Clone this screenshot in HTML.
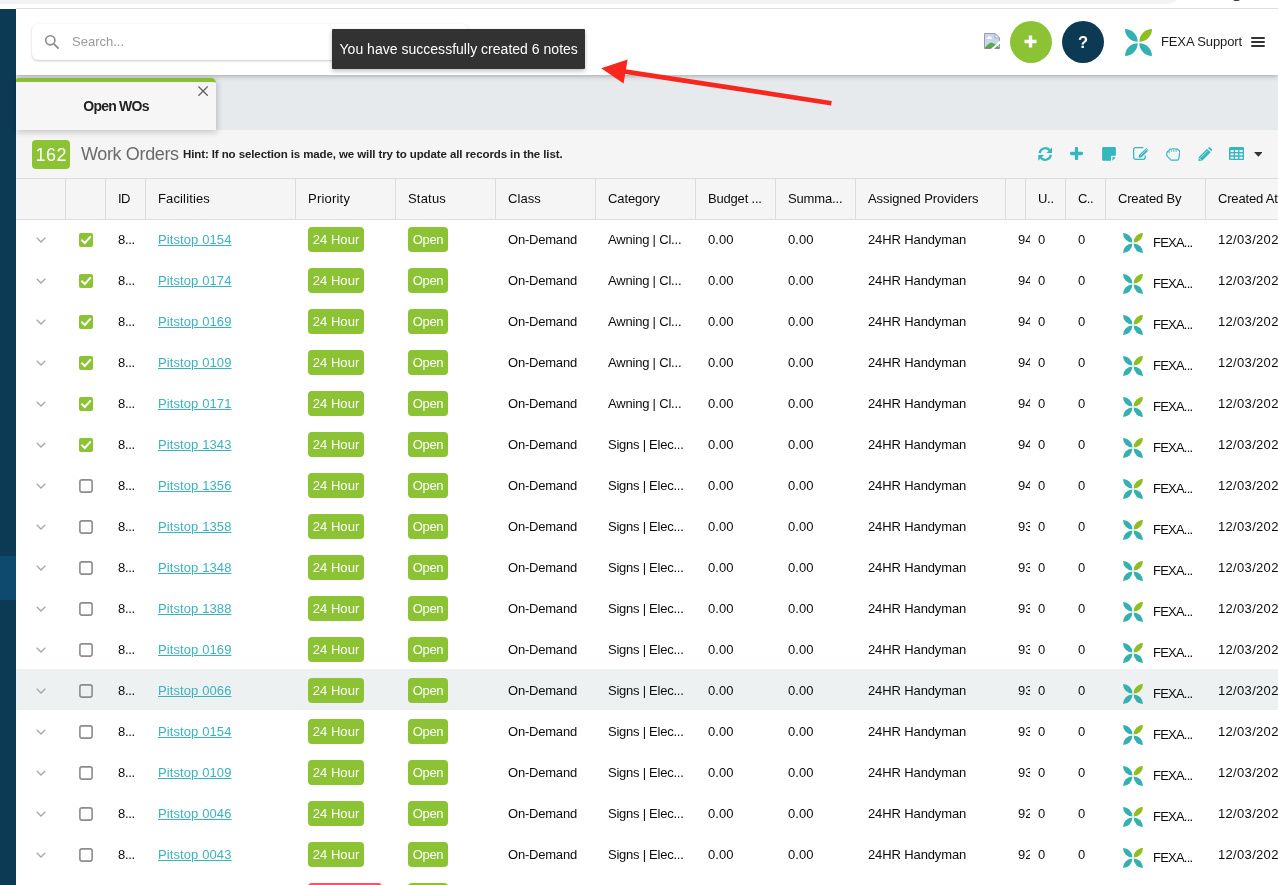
<!DOCTYPE html>
<html><head><meta charset="utf-8"><title>Work Orders</title>
<style>
*{box-sizing:border-box;margin:0;padding:0}
html,body{width:1278px;height:885px;overflow:hidden;background:#fff;font-family:"Liberation Sans",sans-serif;color:#1a1a1a}
.abs{position:absolute}
#chrome{position:absolute;left:0;top:0;width:1278px;height:9px;background:#fff}
#chrome .bar{position:absolute;left:-20px;top:-20px;width:1201px;height:24px;border-radius:0 0 14px 0;background:#f1f3f4}
#chrome .ln{position:absolute;left:16px;right:0;top:8px;height:1px;background:#dcdee1}
#chrome .dot{position:absolute;left:1232px;top:-3px;width:9px;height:4px;background:#333;border-radius:0 0 4px 4px}
#side{position:absolute;left:0;top:9px;width:16px;height:876px;background:#0c3954}
#side .act{position:absolute;left:0;top:547px;width:16px;height:44px;background:#0e4a6e}
#top{position:absolute;left:16px;top:9px;width:1262px;height:66px;background:#fff;box-shadow:0 1px 5px rgba(0,0,0,.3);z-index:5;clip-path:inset(0px 0px -14px 0px)}
#search{position:absolute;left:16px;top:15px;width:436px;height:36px;border-radius:6px;background:#fff;box-shadow:0 1px 3px rgba(0,0,0,.13),0 1px 2px rgba(0,0,0,.1)}
#search span{position:absolute;left:40px;top:10px;font-size:13px;color:#9a9a9a}
#search svg{position:absolute;left:12px;top:10px;width:16px;height:16px}
#toast{position:absolute;left:332px;top:29px;width:253px;height:39.7px;background:#323232;border-radius:1px;color:#fff;font-size:14px;line-height:41px;padding-left:7.5px;letter-spacing:0.02px;z-index:9;box-shadow:0 2px 4px rgba(0,0,0,.25);white-space:nowrap}
#arrow{position:absolute;left:0;top:0;width:1278px;height:140px;z-index:10;pointer-events:none}
.circ{position:absolute;top:12px;width:42px;height:42px;border-radius:50%}
#uname{position:absolute;left:1145px;top:25px;letter-spacing:-0.12px;font-size:13px;color:#1c1c1c;white-space:nowrap}
#burger{position:absolute;left:1235px;top:28px;width:14px;height:12px}
#burger i{display:block;height:2.4px;background:#333;margin-bottom:1.6px;border-radius:1px}
.lg1{position:absolute;left:1108.5px;top:19.5px;width:27px;height:27px}
#tabs{position:absolute;left:16px;top:75px;width:1262px;height:55px;background:#e6eaed;z-index:4}
#tab{position:absolute;left:0;top:3px;width:200px;height:52px;background:#f6f6f6;border-top:4px solid #8bc334;border-radius:2px 5px 0 0;box-shadow:1px 2px 6px rgba(0,0,0,.21)}
#tab b{position:absolute;left:0;width:200px;text-align:center;top:16px;font-size:14px;letter-spacing:-0.77px;color:#222}
#tab svg{position:absolute;left:181.8px;top:4px;width:10.2px;height:10.2px}
#bar{position:absolute;left:16px;top:130px;width:1262px;height:48px;background:#f5f5f5}
#cnt{position:absolute;left:16px;top:10px;width:38px;height:29px;padding-top:1px;border-radius:4px;background:#8bc334;color:#fff;font-size:18px;line-height:29px;text-align:center;letter-spacing:0.4px;text-indent:0.4px}
#ttl{position:absolute;left:65px;top:13.5px;letter-spacing:-0.36px;font-size:18px;color:#6b6b6b;white-space:nowrap}
#hint{position:absolute;left:167px;top:18px;letter-spacing:-0.1px;font-size:11.5px;font-weight:bold;color:#222;white-space:nowrap}
#thead{position:absolute;z-index:3;left:16px;top:178px;width:1262px;height:42px;background:#f5f5f5;border-top:1px solid #dcdcdc;border-bottom:1px solid #dcdcdc}
.th{position:absolute;top:0;height:40px;border-right:1px solid #dcdcdc;font-size:13px;line-height:40px;padding-left:12px;white-space:nowrap;overflow:hidden;color:#0c0c0c}
.row{position:absolute;left:16px;width:1262px;height:41px;background:#fff;font-size:13px}
.row.hov{background:#eef1f2}
.c{position:absolute;top:14px;line-height:15px;white-space:nowrap;color:#0c0c0c}
.lnk{color:#3bb3bd;text-decoration:underline}
.bdg{position:absolute;top:9px;height:25px;border-radius:4px;background:#8bc334;color:#fff;text-align:center;line-height:25px;font-size:13px;white-space:nowrap}
.bdg.red{background:#f0566a}
.chev{position:absolute;left:20px;top:19px;width:10px;height:6px}
.cb{position:absolute;left:63px;top:15px;width:14px;height:14px;border-radius:2px}
.cb.on{background:#8bc334}
.cb svg{display:block;width:14px;height:14px}
.lg2{position:absolute;left:1107px;top:15px;width:20px;height:20px}
.n94{width:12px;overflow:hidden}
.fx{top:16.5px}
.tool{position:absolute;top:15px;width:16px;height:16px}
#wrap{position:absolute;left:0;top:0;width:1278px;height:885px;will-change:transform}
</style></head><body><div id="wrap">
<div id="chrome"><div class="bar"></div><div class="ln"></div><div class="dot"></div></div>
<div id="side"><div class="act"></div></div>
<div id="tabs"><div id="tab"><b>Open WOs</b><svg viewBox="0 0 11 11"><path d="M0.5 0.5L10.5 10.5M10.5 0.5L0.5 10.5" stroke="#5e5e5e" stroke-width="1.4"/></svg></div></div>
<div id="top">
<div id="search"><svg viewBox="0 0 16 16"><circle cx="6.3" cy="6.3" r="4.6" fill="none" stroke="#8a8a8a" stroke-width="1.6"/><path d="M9.8 9.8L14.6 14.6" stroke="#8a8a8a" stroke-width="1.8"/></svg><span>Search...</span></div>
<svg class="abs" style="left:968px;top:24px;width:16px;height:16px" viewBox="0 0 16 16"><path d="M0.5 0.5H11L15.5 5V15.5H0.5Z" fill="#c6d6f5" stroke="#9c9ca8" stroke-width="1"/><path d="M11 0.5V5H15.5Z" fill="#f7f7f7" stroke="#a8a8b0" stroke-width="1"/><path d="M2.2 5.8Q2.2 4.6 3.6 4.6Q4.2 3 5.6 3.4Q7.2 3.2 7.4 4.8Q8.2 5 7.9 5.9Z" fill="#fff"/><path d="M1 15Q4.5 9.4 8.5 9.9Q12.5 10.4 15 15Z" fill="#5aad3e"/><path d="M1 15H15" stroke="#6b8a6b" stroke-width="1"/><path d="M6.6 16.2L16.2 7.4V10.2L9.8 16.2Z" fill="#fff"/></svg>
<div class="circ" style="left:994px;background:#8bc334"><svg class="abs" style="left:14px;top:14px;width:13px;height:13px" viewBox="0 0 13 13"><path d="M6.5 0.5V12.5M0.5 6.5H12.5" stroke="#fff" stroke-width="3.4"/></svg></div>
<div class="circ" style="left:1046px;background:#0c3954;color:#fff;font-weight:bold;font-size:16.5px;text-align:center;line-height:42px">?</div>
<svg class="lg1" viewBox="-1 -1 2 2"><path d="M-1-1A.94.94 0 0 1-.06-.06A.94.94 0 0 1-1-1Z" fill="#35b0b0"/><path d="M1-1A.94.94 0 0 0 .06-.06A.94.94 0 0 0 1-1Z" fill="#8fbe21"/><path d="M-1 1A.94.94 0 0 0-.06.06A.94.94 0 0 0-1 1Z" fill="#35b0b0"/><path d="M1 1A.94.94 0 0 1 .06.06A.94.94 0 0 1 1 1Z" fill="#35b0b0"/></svg>
<span id="uname">FEXA Support</span>
<div id="burger"><i></i><i></i><i></i></div>
</div>
<div id="toast">You have successfully created 6 notes</div>
<svg id="arrow" viewBox="0 0 1278 140"><path d="M831.4 103.2L622 71.1" stroke="#f8261c" stroke-width="4.7" fill="none"/><path d="M601.2 68.3L627.6 59.6L623.6 83.6Z" fill="#f8261c"/></svg>
<div id="bar"><div id="cnt">162</div><div id="ttl">Work Orders</div><div id="hint">Hint: If no selection is made, we will try to update all records in the list.</div>
<svg class="abs" style="left:1021.8px;top:17px;width:14.5px;height:14px" viewBox="0 0 14 14"><path d="M1.4 6.1A5.75 5.75 0 0 1 11.3 3.1" fill="none" stroke="#34b7be" stroke-width="2.3"/><path d="M14 0.3V6.1H8.2Z" fill="#34b7be"/><path d="M12.6 7.9A5.75 5.75 0 0 1 2.7 10.9" fill="none" stroke="#34b7be" stroke-width="2.3"/><path d="M0 13.7V7.9H5.8Z" fill="#34b7be"/></svg>
<svg class="abs" style="left:1054.3px;top:17.2px;width:13px;height:13px" viewBox="0 0 13 13"><path d="M6.5 1.5V11.5M1.5 6.5H11.5" stroke="#34b7be" stroke-width="3.3" stroke-linecap="round"/></svg>
<svg class="abs" style="left:1086.1px;top:17.2px;width:14px;height:13.8px" viewBox="0 0 14 14"><path d="M1.2 0H12.8Q14 0 14 1.2V9H10.2Q9 9 9 10.2V14H1.2Q0 14 0 12.8V1.2Q0 0 1.2 0Z" fill="#34b7be"/><path d="M10.4 10.4H14L10.4 14Z" fill="#34b7be"/></svg>
<svg class="abs" style="left:1117px;top:17px;width:16.5px;height:13px" viewBox="0 0 16.5 13"><path d="M10.2 0.7H2.6Q0.6 0.7 0.6 2.7V10.3Q0.6 12.3 2.6 12.3H10.2Q12.2 12.3 12.2 10.3V8.6" fill="none" stroke="#34b7be" stroke-width="1.25"/><path d="M6.1 8.1L13.3 0.9L15.6 3.2L8.4 10.4L5.7 10.8Z" fill="#34b7be"/><path d="M7.6 8.3L13.2 2.7" stroke="#f5f5f5" stroke-width=".6"/><path d="M12.4 1.5L15 4.1" stroke="#f5f5f5" stroke-width=".7"/></svg>
<svg class="abs" style="left:1149.8px;top:18.4px;width:14.6px;height:12.8px" viewBox="0 0 14.6 12.8"><path d="M4.2 11.2L1.6 8.6Q0.4 7.2 0.8 5.2Q1.1 3.2 2.8 2.6Q3.4 1 5 1.2Q6.2 0.4 7.4 1Q8.8 0.4 10 1.2Q11.8 0.8 12.6 2.2Q13.9 2.6 13.8 4.4L13 9.4Q12.8 10.6 12.4 11.4Q12.2 12.2 11.4 12.2H5.4Q4.4 12.2 4.2 11.2Z" fill="none" stroke="#34b7be" stroke-width="1.2" stroke-linejoin="round"/><path d="M3.2 3V5.4M5.4 1.8V3.8M7.7 1.6V3.8M10.1 1.8V3.8" stroke="#34b7be" stroke-width=".9" fill="none"/></svg>
<svg class="abs" style="left:1181.6px;top:17.2px;width:14.4px;height:14px" viewBox="0 0 14.4 14"><path d="M0.4 13.9L0.9 9.9L9.1 1.7L12.6 5.2L4.4 13.4Z" fill="#34b7be"/><path d="M10 0.9L10.8 0.2Q11.4 -0.1 12 0.4L13.9 2.3Q14.4 2.9 14 3.5L13.3 4.3Z" fill="#34b7be"/><path d="M2.6 10.6L9.6 3.6" stroke="#f5f5f5" stroke-width=".7"/><path d="M1.3 11.2L3.2 13.1" stroke="#f5f5f5" stroke-width=".7"/></svg>
<svg class="abs" style="left:1213.2px;top:17px;width:15.2px;height:13.2px" viewBox="0 0 15.2 13.2"><rect x="0" y="0" width="15.2" height="13.2" rx="1.6" fill="#34b7be"/><g fill="#f5f5f5"><rect x="1.5" y="3.1" width="3.2" height="1.9"/><rect x="6" y="3.1" width="3.2" height="1.9"/><rect x="10.5" y="3.1" width="3.2" height="1.9"/><rect x="1.5" y="6.4" width="3.2" height="1.9"/><rect x="6" y="6.4" width="3.2" height="1.9"/><rect x="10.5" y="6.4" width="3.2" height="1.9"/><rect x="1.5" y="9.8" width="3.2" height="1.9"/><rect x="6" y="9.8" width="3.2" height="1.9"/><rect x="10.5" y="9.8" width="3.2" height="1.9"/></g></svg>
<svg class="abs" style="left:1237.6px;top:21.8px;width:8.8px;height:4.8px" viewBox="0 0 8.8 4.8"><path d="M0 0H8.8L4.4 4.8Z" fill="#333"/></svg>
</div>
<div id="thead">
<div class="th" style="left:0px;width:50px;"><span></span></div>
<div class="th" style="left:50px;width:40px;"><span></span></div>
<div class="th" style="left:90px;width:40px;letter-spacing:-0.5px"><span>ID</span></div>
<div class="th" style="left:130px;width:150px;letter-spacing:0.14px"><span>Facilities</span></div>
<div class="th" style="left:280px;width:100px;letter-spacing:0.21px"><span>Priority</span></div>
<div class="th" style="left:380px;width:100px;letter-spacing:0.2px"><span>Status</span></div>
<div class="th" style="left:480px;width:100px;letter-spacing:0.08px"><span>Class</span></div>
<div class="th" style="left:580px;width:100px;letter-spacing:-0.11px"><span>Category</span></div>
<div class="th" style="left:680px;width:80px;letter-spacing:-0.19px"><span>Budget ...</span></div>
<div class="th" style="left:760px;width:80px;letter-spacing:-0.16px"><span>Summa...</span></div>
<div class="th" style="left:840px;width:150px;letter-spacing:-0.09px"><span>Assigned Providers</span></div>
<div class="th" style="left:990px;width:20px;"><span></span></div>
<div class="th" style="left:1010px;width:40px;letter-spacing:-0.3px"><span>U..</span></div>
<div class="th" style="left:1050px;width:40px;letter-spacing:-0.55px"><span>C..</span></div>
<div class="th" style="left:1090px;width:100px;letter-spacing:-0.18px"><span>Created By</span></div>
<div class="th" style="left:1190px;width:100px;letter-spacing:-0.18px"><span>Created At</span></div>
</div>
<div class="row" style="top:218px">
<svg class="chev" viewBox="0 0 10 6"><path d="M0.7 0.7L5 5L9.3 0.7" fill="none" stroke="#a6a6a6" stroke-width="1.25"/></svg>
<span class="cb on"><svg viewBox="0 0 14 14"><path d="M2.4 6.8L5.8 10L11.8 3.4" fill="none" stroke="#fff" stroke-width="2"/></svg></span>
<span class="c" style="left:102px;letter-spacing:-0.3px">8...</span>
<a class="c lnk" style="left:142px;letter-spacing:.1px">Pitstop 0154</a>
<span class="bdg" style="left:292px;width:56px;letter-spacing:0.07px">24 Hour</span>
<span class="bdg" style="left:392px;width:40px;letter-spacing:-0.33px">Open</span>
<span class="c" style="left:492px;letter-spacing:-0.21px">On-Demand</span>
<span class="c" style="left:592px;letter-spacing:-0.2px">Awning | Cl...</span>
<span class="c" style="left:692px;letter-spacing:0.1px">0.00</span>
<span class="c" style="left:772px;letter-spacing:0.1px">0.00</span>
<span class="c" style="left:852px;letter-spacing:-0.12px">24HR Handyman</span>
<span class="c n94" style="left:1002px">94</span>
<span class="c" style="left:1022px">0</span>
<span class="c" style="left:1062px">0</span>
<svg class="lg2" viewBox="-1 -1 2 2"><path d="M-1-1A.94.94 0 0 1-.06-.06A.94.94 0 0 1-1-1Z" fill="#35b0b0"/><path d="M1-1A.94.94 0 0 0 .06-.06A.94.94 0 0 0 1-1Z" fill="#8fbe21"/><path d="M-1 1A.94.94 0 0 0-.06.06A.94.94 0 0 0-1 1Z" fill="#35b0b0"/><path d="M1 1A.94.94 0 0 1 .06.06A.94.94 0 0 1 1 1Z" fill="#35b0b0"/></svg>
<span class="c fx" style="left:1137px;letter-spacing:-0.78px">FEXA...</span>
<span class="c" style="left:1202px;letter-spacing:.32px">12/03/2024</span>
</div>
<div class="row" style="top:259px">
<svg class="chev" viewBox="0 0 10 6"><path d="M0.7 0.7L5 5L9.3 0.7" fill="none" stroke="#a6a6a6" stroke-width="1.25"/></svg>
<span class="cb on"><svg viewBox="0 0 14 14"><path d="M2.4 6.8L5.8 10L11.8 3.4" fill="none" stroke="#fff" stroke-width="2"/></svg></span>
<span class="c" style="left:102px;letter-spacing:-0.3px">8...</span>
<a class="c lnk" style="left:142px;letter-spacing:.1px">Pitstop 0174</a>
<span class="bdg" style="left:292px;width:56px;letter-spacing:0.07px">24 Hour</span>
<span class="bdg" style="left:392px;width:40px;letter-spacing:-0.33px">Open</span>
<span class="c" style="left:492px;letter-spacing:-0.21px">On-Demand</span>
<span class="c" style="left:592px;letter-spacing:-0.2px">Awning | Cl...</span>
<span class="c" style="left:692px;letter-spacing:0.1px">0.00</span>
<span class="c" style="left:772px;letter-spacing:0.1px">0.00</span>
<span class="c" style="left:852px;letter-spacing:-0.12px">24HR Handyman</span>
<span class="c n94" style="left:1002px">94</span>
<span class="c" style="left:1022px">0</span>
<span class="c" style="left:1062px">0</span>
<svg class="lg2" viewBox="-1 -1 2 2"><path d="M-1-1A.94.94 0 0 1-.06-.06A.94.94 0 0 1-1-1Z" fill="#35b0b0"/><path d="M1-1A.94.94 0 0 0 .06-.06A.94.94 0 0 0 1-1Z" fill="#8fbe21"/><path d="M-1 1A.94.94 0 0 0-.06.06A.94.94 0 0 0-1 1Z" fill="#35b0b0"/><path d="M1 1A.94.94 0 0 1 .06.06A.94.94 0 0 1 1 1Z" fill="#35b0b0"/></svg>
<span class="c fx" style="left:1137px;letter-spacing:-0.78px">FEXA...</span>
<span class="c" style="left:1202px;letter-spacing:.32px">12/03/2024</span>
</div>
<div class="row" style="top:300px">
<svg class="chev" viewBox="0 0 10 6"><path d="M0.7 0.7L5 5L9.3 0.7" fill="none" stroke="#a6a6a6" stroke-width="1.25"/></svg>
<span class="cb on"><svg viewBox="0 0 14 14"><path d="M2.4 6.8L5.8 10L11.8 3.4" fill="none" stroke="#fff" stroke-width="2"/></svg></span>
<span class="c" style="left:102px;letter-spacing:-0.3px">8...</span>
<a class="c lnk" style="left:142px;letter-spacing:.1px">Pitstop 0169</a>
<span class="bdg" style="left:292px;width:56px;letter-spacing:0.07px">24 Hour</span>
<span class="bdg" style="left:392px;width:40px;letter-spacing:-0.33px">Open</span>
<span class="c" style="left:492px;letter-spacing:-0.21px">On-Demand</span>
<span class="c" style="left:592px;letter-spacing:-0.2px">Awning | Cl...</span>
<span class="c" style="left:692px;letter-spacing:0.1px">0.00</span>
<span class="c" style="left:772px;letter-spacing:0.1px">0.00</span>
<span class="c" style="left:852px;letter-spacing:-0.12px">24HR Handyman</span>
<span class="c n94" style="left:1002px">94</span>
<span class="c" style="left:1022px">0</span>
<span class="c" style="left:1062px">0</span>
<svg class="lg2" viewBox="-1 -1 2 2"><path d="M-1-1A.94.94 0 0 1-.06-.06A.94.94 0 0 1-1-1Z" fill="#35b0b0"/><path d="M1-1A.94.94 0 0 0 .06-.06A.94.94 0 0 0 1-1Z" fill="#8fbe21"/><path d="M-1 1A.94.94 0 0 0-.06.06A.94.94 0 0 0-1 1Z" fill="#35b0b0"/><path d="M1 1A.94.94 0 0 1 .06.06A.94.94 0 0 1 1 1Z" fill="#35b0b0"/></svg>
<span class="c fx" style="left:1137px;letter-spacing:-0.78px">FEXA...</span>
<span class="c" style="left:1202px;letter-spacing:.32px">12/03/2024</span>
</div>
<div class="row" style="top:341px">
<svg class="chev" viewBox="0 0 10 6"><path d="M0.7 0.7L5 5L9.3 0.7" fill="none" stroke="#a6a6a6" stroke-width="1.25"/></svg>
<span class="cb on"><svg viewBox="0 0 14 14"><path d="M2.4 6.8L5.8 10L11.8 3.4" fill="none" stroke="#fff" stroke-width="2"/></svg></span>
<span class="c" style="left:102px;letter-spacing:-0.3px">8...</span>
<a class="c lnk" style="left:142px;letter-spacing:.1px">Pitstop 0109</a>
<span class="bdg" style="left:292px;width:56px;letter-spacing:0.07px">24 Hour</span>
<span class="bdg" style="left:392px;width:40px;letter-spacing:-0.33px">Open</span>
<span class="c" style="left:492px;letter-spacing:-0.21px">On-Demand</span>
<span class="c" style="left:592px;letter-spacing:-0.2px">Awning | Cl...</span>
<span class="c" style="left:692px;letter-spacing:0.1px">0.00</span>
<span class="c" style="left:772px;letter-spacing:0.1px">0.00</span>
<span class="c" style="left:852px;letter-spacing:-0.12px">24HR Handyman</span>
<span class="c n94" style="left:1002px">94</span>
<span class="c" style="left:1022px">0</span>
<span class="c" style="left:1062px">0</span>
<svg class="lg2" viewBox="-1 -1 2 2"><path d="M-1-1A.94.94 0 0 1-.06-.06A.94.94 0 0 1-1-1Z" fill="#35b0b0"/><path d="M1-1A.94.94 0 0 0 .06-.06A.94.94 0 0 0 1-1Z" fill="#8fbe21"/><path d="M-1 1A.94.94 0 0 0-.06.06A.94.94 0 0 0-1 1Z" fill="#35b0b0"/><path d="M1 1A.94.94 0 0 1 .06.06A.94.94 0 0 1 1 1Z" fill="#35b0b0"/></svg>
<span class="c fx" style="left:1137px;letter-spacing:-0.78px">FEXA...</span>
<span class="c" style="left:1202px;letter-spacing:.32px">12/03/2024</span>
</div>
<div class="row" style="top:382px">
<svg class="chev" viewBox="0 0 10 6"><path d="M0.7 0.7L5 5L9.3 0.7" fill="none" stroke="#a6a6a6" stroke-width="1.25"/></svg>
<span class="cb on"><svg viewBox="0 0 14 14"><path d="M2.4 6.8L5.8 10L11.8 3.4" fill="none" stroke="#fff" stroke-width="2"/></svg></span>
<span class="c" style="left:102px;letter-spacing:-0.3px">8...</span>
<a class="c lnk" style="left:142px;letter-spacing:.1px">Pitstop 0171</a>
<span class="bdg" style="left:292px;width:56px;letter-spacing:0.07px">24 Hour</span>
<span class="bdg" style="left:392px;width:40px;letter-spacing:-0.33px">Open</span>
<span class="c" style="left:492px;letter-spacing:-0.21px">On-Demand</span>
<span class="c" style="left:592px;letter-spacing:-0.2px">Awning | Cl...</span>
<span class="c" style="left:692px;letter-spacing:0.1px">0.00</span>
<span class="c" style="left:772px;letter-spacing:0.1px">0.00</span>
<span class="c" style="left:852px;letter-spacing:-0.12px">24HR Handyman</span>
<span class="c n94" style="left:1002px">94</span>
<span class="c" style="left:1022px">0</span>
<span class="c" style="left:1062px">0</span>
<svg class="lg2" viewBox="-1 -1 2 2"><path d="M-1-1A.94.94 0 0 1-.06-.06A.94.94 0 0 1-1-1Z" fill="#35b0b0"/><path d="M1-1A.94.94 0 0 0 .06-.06A.94.94 0 0 0 1-1Z" fill="#8fbe21"/><path d="M-1 1A.94.94 0 0 0-.06.06A.94.94 0 0 0-1 1Z" fill="#35b0b0"/><path d="M1 1A.94.94 0 0 1 .06.06A.94.94 0 0 1 1 1Z" fill="#35b0b0"/></svg>
<span class="c fx" style="left:1137px;letter-spacing:-0.78px">FEXA...</span>
<span class="c" style="left:1202px;letter-spacing:.32px">12/03/2024</span>
</div>
<div class="row" style="top:423px">
<svg class="chev" viewBox="0 0 10 6"><path d="M0.7 0.7L5 5L9.3 0.7" fill="none" stroke="#a6a6a6" stroke-width="1.25"/></svg>
<span class="cb on"><svg viewBox="0 0 14 14"><path d="M2.4 6.8L5.8 10L11.8 3.4" fill="none" stroke="#fff" stroke-width="2"/></svg></span>
<span class="c" style="left:102px;letter-spacing:-0.3px">8...</span>
<a class="c lnk" style="left:142px;letter-spacing:.1px">Pitstop 1343</a>
<span class="bdg" style="left:292px;width:56px;letter-spacing:0.07px">24 Hour</span>
<span class="bdg" style="left:392px;width:40px;letter-spacing:-0.33px">Open</span>
<span class="c" style="left:492px;letter-spacing:-0.21px">On-Demand</span>
<span class="c" style="left:592px;letter-spacing:-0.25px">Signs | Elec...</span>
<span class="c" style="left:692px;letter-spacing:0.1px">0.00</span>
<span class="c" style="left:772px;letter-spacing:0.1px">0.00</span>
<span class="c" style="left:852px;letter-spacing:-0.12px">24HR Handyman</span>
<span class="c n94" style="left:1002px">94</span>
<span class="c" style="left:1022px">0</span>
<span class="c" style="left:1062px">0</span>
<svg class="lg2" viewBox="-1 -1 2 2"><path d="M-1-1A.94.94 0 0 1-.06-.06A.94.94 0 0 1-1-1Z" fill="#35b0b0"/><path d="M1-1A.94.94 0 0 0 .06-.06A.94.94 0 0 0 1-1Z" fill="#8fbe21"/><path d="M-1 1A.94.94 0 0 0-.06.06A.94.94 0 0 0-1 1Z" fill="#35b0b0"/><path d="M1 1A.94.94 0 0 1 .06.06A.94.94 0 0 1 1 1Z" fill="#35b0b0"/></svg>
<span class="c fx" style="left:1137px;letter-spacing:-0.78px">FEXA...</span>
<span class="c" style="left:1202px;letter-spacing:.32px">12/03/2024</span>
</div>
<div class="row" style="top:464px">
<svg class="chev" viewBox="0 0 10 6"><path d="M0.7 0.7L5 5L9.3 0.7" fill="none" stroke="#a6a6a6" stroke-width="1.25"/></svg>
<span class="cb"><svg viewBox="0 0 14 14"><rect x="0.9" y="0.9" width="12.2" height="12.2" rx="2" fill="none" stroke="#8c8c8c" stroke-width="1.6"/></svg></span>
<span class="c" style="left:102px;letter-spacing:-0.3px">8...</span>
<a class="c lnk" style="left:142px;letter-spacing:.1px">Pitstop 1356</a>
<span class="bdg" style="left:292px;width:56px;letter-spacing:0.07px">24 Hour</span>
<span class="bdg" style="left:392px;width:40px;letter-spacing:-0.33px">Open</span>
<span class="c" style="left:492px;letter-spacing:-0.21px">On-Demand</span>
<span class="c" style="left:592px;letter-spacing:-0.25px">Signs | Elec...</span>
<span class="c" style="left:692px;letter-spacing:0.1px">0.00</span>
<span class="c" style="left:772px;letter-spacing:0.1px">0.00</span>
<span class="c" style="left:852px;letter-spacing:-0.12px">24HR Handyman</span>
<span class="c n94" style="left:1002px">94</span>
<span class="c" style="left:1022px">0</span>
<span class="c" style="left:1062px">0</span>
<svg class="lg2" viewBox="-1 -1 2 2"><path d="M-1-1A.94.94 0 0 1-.06-.06A.94.94 0 0 1-1-1Z" fill="#35b0b0"/><path d="M1-1A.94.94 0 0 0 .06-.06A.94.94 0 0 0 1-1Z" fill="#8fbe21"/><path d="M-1 1A.94.94 0 0 0-.06.06A.94.94 0 0 0-1 1Z" fill="#35b0b0"/><path d="M1 1A.94.94 0 0 1 .06.06A.94.94 0 0 1 1 1Z" fill="#35b0b0"/></svg>
<span class="c fx" style="left:1137px;letter-spacing:-0.78px">FEXA...</span>
<span class="c" style="left:1202px;letter-spacing:.32px">12/03/2024</span>
</div>
<div class="row" style="top:505px">
<svg class="chev" viewBox="0 0 10 6"><path d="M0.7 0.7L5 5L9.3 0.7" fill="none" stroke="#a6a6a6" stroke-width="1.25"/></svg>
<span class="cb"><svg viewBox="0 0 14 14"><rect x="0.9" y="0.9" width="12.2" height="12.2" rx="2" fill="none" stroke="#8c8c8c" stroke-width="1.6"/></svg></span>
<span class="c" style="left:102px;letter-spacing:-0.3px">8...</span>
<a class="c lnk" style="left:142px;letter-spacing:.1px">Pitstop 1358</a>
<span class="bdg" style="left:292px;width:56px;letter-spacing:0.07px">24 Hour</span>
<span class="bdg" style="left:392px;width:40px;letter-spacing:-0.33px">Open</span>
<span class="c" style="left:492px;letter-spacing:-0.21px">On-Demand</span>
<span class="c" style="left:592px;letter-spacing:-0.25px">Signs | Elec...</span>
<span class="c" style="left:692px;letter-spacing:0.1px">0.00</span>
<span class="c" style="left:772px;letter-spacing:0.1px">0.00</span>
<span class="c" style="left:852px;letter-spacing:-0.12px">24HR Handyman</span>
<span class="c n94" style="left:1002px">93</span>
<span class="c" style="left:1022px">0</span>
<span class="c" style="left:1062px">0</span>
<svg class="lg2" viewBox="-1 -1 2 2"><path d="M-1-1A.94.94 0 0 1-.06-.06A.94.94 0 0 1-1-1Z" fill="#35b0b0"/><path d="M1-1A.94.94 0 0 0 .06-.06A.94.94 0 0 0 1-1Z" fill="#8fbe21"/><path d="M-1 1A.94.94 0 0 0-.06.06A.94.94 0 0 0-1 1Z" fill="#35b0b0"/><path d="M1 1A.94.94 0 0 1 .06.06A.94.94 0 0 1 1 1Z" fill="#35b0b0"/></svg>
<span class="c fx" style="left:1137px;letter-spacing:-0.78px">FEXA...</span>
<span class="c" style="left:1202px;letter-spacing:.32px">12/03/2024</span>
</div>
<div class="row" style="top:546px">
<svg class="chev" viewBox="0 0 10 6"><path d="M0.7 0.7L5 5L9.3 0.7" fill="none" stroke="#a6a6a6" stroke-width="1.25"/></svg>
<span class="cb"><svg viewBox="0 0 14 14"><rect x="0.9" y="0.9" width="12.2" height="12.2" rx="2" fill="none" stroke="#8c8c8c" stroke-width="1.6"/></svg></span>
<span class="c" style="left:102px;letter-spacing:-0.3px">8...</span>
<a class="c lnk" style="left:142px;letter-spacing:.1px">Pitstop 1348</a>
<span class="bdg" style="left:292px;width:56px;letter-spacing:0.07px">24 Hour</span>
<span class="bdg" style="left:392px;width:40px;letter-spacing:-0.33px">Open</span>
<span class="c" style="left:492px;letter-spacing:-0.21px">On-Demand</span>
<span class="c" style="left:592px;letter-spacing:-0.25px">Signs | Elec...</span>
<span class="c" style="left:692px;letter-spacing:0.1px">0.00</span>
<span class="c" style="left:772px;letter-spacing:0.1px">0.00</span>
<span class="c" style="left:852px;letter-spacing:-0.12px">24HR Handyman</span>
<span class="c n94" style="left:1002px">93</span>
<span class="c" style="left:1022px">0</span>
<span class="c" style="left:1062px">0</span>
<svg class="lg2" viewBox="-1 -1 2 2"><path d="M-1-1A.94.94 0 0 1-.06-.06A.94.94 0 0 1-1-1Z" fill="#35b0b0"/><path d="M1-1A.94.94 0 0 0 .06-.06A.94.94 0 0 0 1-1Z" fill="#8fbe21"/><path d="M-1 1A.94.94 0 0 0-.06.06A.94.94 0 0 0-1 1Z" fill="#35b0b0"/><path d="M1 1A.94.94 0 0 1 .06.06A.94.94 0 0 1 1 1Z" fill="#35b0b0"/></svg>
<span class="c fx" style="left:1137px;letter-spacing:-0.78px">FEXA...</span>
<span class="c" style="left:1202px;letter-spacing:.32px">12/03/2024</span>
</div>
<div class="row" style="top:587px">
<svg class="chev" viewBox="0 0 10 6"><path d="M0.7 0.7L5 5L9.3 0.7" fill="none" stroke="#a6a6a6" stroke-width="1.25"/></svg>
<span class="cb"><svg viewBox="0 0 14 14"><rect x="0.9" y="0.9" width="12.2" height="12.2" rx="2" fill="none" stroke="#8c8c8c" stroke-width="1.6"/></svg></span>
<span class="c" style="left:102px;letter-spacing:-0.3px">8...</span>
<a class="c lnk" style="left:142px;letter-spacing:.1px">Pitstop 1388</a>
<span class="bdg" style="left:292px;width:56px;letter-spacing:0.07px">24 Hour</span>
<span class="bdg" style="left:392px;width:40px;letter-spacing:-0.33px">Open</span>
<span class="c" style="left:492px;letter-spacing:-0.21px">On-Demand</span>
<span class="c" style="left:592px;letter-spacing:-0.25px">Signs | Elec...</span>
<span class="c" style="left:692px;letter-spacing:0.1px">0.00</span>
<span class="c" style="left:772px;letter-spacing:0.1px">0.00</span>
<span class="c" style="left:852px;letter-spacing:-0.12px">24HR Handyman</span>
<span class="c n94" style="left:1002px">93</span>
<span class="c" style="left:1022px">0</span>
<span class="c" style="left:1062px">0</span>
<svg class="lg2" viewBox="-1 -1 2 2"><path d="M-1-1A.94.94 0 0 1-.06-.06A.94.94 0 0 1-1-1Z" fill="#35b0b0"/><path d="M1-1A.94.94 0 0 0 .06-.06A.94.94 0 0 0 1-1Z" fill="#8fbe21"/><path d="M-1 1A.94.94 0 0 0-.06.06A.94.94 0 0 0-1 1Z" fill="#35b0b0"/><path d="M1 1A.94.94 0 0 1 .06.06A.94.94 0 0 1 1 1Z" fill="#35b0b0"/></svg>
<span class="c fx" style="left:1137px;letter-spacing:-0.78px">FEXA...</span>
<span class="c" style="left:1202px;letter-spacing:.32px">12/03/2024</span>
</div>
<div class="row" style="top:628px">
<svg class="chev" viewBox="0 0 10 6"><path d="M0.7 0.7L5 5L9.3 0.7" fill="none" stroke="#a6a6a6" stroke-width="1.25"/></svg>
<span class="cb"><svg viewBox="0 0 14 14"><rect x="0.9" y="0.9" width="12.2" height="12.2" rx="2" fill="none" stroke="#8c8c8c" stroke-width="1.6"/></svg></span>
<span class="c" style="left:102px;letter-spacing:-0.3px">8...</span>
<a class="c lnk" style="left:142px;letter-spacing:.1px">Pitstop 0169</a>
<span class="bdg" style="left:292px;width:56px;letter-spacing:0.07px">24 Hour</span>
<span class="bdg" style="left:392px;width:40px;letter-spacing:-0.33px">Open</span>
<span class="c" style="left:492px;letter-spacing:-0.21px">On-Demand</span>
<span class="c" style="left:592px;letter-spacing:-0.25px">Signs | Elec...</span>
<span class="c" style="left:692px;letter-spacing:0.1px">0.00</span>
<span class="c" style="left:772px;letter-spacing:0.1px">0.00</span>
<span class="c" style="left:852px;letter-spacing:-0.12px">24HR Handyman</span>
<span class="c n94" style="left:1002px">93</span>
<span class="c" style="left:1022px">0</span>
<span class="c" style="left:1062px">0</span>
<svg class="lg2" viewBox="-1 -1 2 2"><path d="M-1-1A.94.94 0 0 1-.06-.06A.94.94 0 0 1-1-1Z" fill="#35b0b0"/><path d="M1-1A.94.94 0 0 0 .06-.06A.94.94 0 0 0 1-1Z" fill="#8fbe21"/><path d="M-1 1A.94.94 0 0 0-.06.06A.94.94 0 0 0-1 1Z" fill="#35b0b0"/><path d="M1 1A.94.94 0 0 1 .06.06A.94.94 0 0 1 1 1Z" fill="#35b0b0"/></svg>
<span class="c fx" style="left:1137px;letter-spacing:-0.78px">FEXA...</span>
<span class="c" style="left:1202px;letter-spacing:.32px">12/03/2024</span>
</div>
<div class="row hov" style="top:669px">
<svg class="chev" viewBox="0 0 10 6"><path d="M0.7 0.7L5 5L9.3 0.7" fill="none" stroke="#a6a6a6" stroke-width="1.25"/></svg>
<span class="cb"><svg viewBox="0 0 14 14"><rect x="0.9" y="0.9" width="12.2" height="12.2" rx="2" fill="none" stroke="#8c8c8c" stroke-width="1.6"/></svg></span>
<span class="c" style="left:102px;letter-spacing:-0.3px">8...</span>
<a class="c lnk" style="left:142px;letter-spacing:.1px">Pitstop 0066</a>
<span class="bdg" style="left:292px;width:56px;letter-spacing:0.07px">24 Hour</span>
<span class="bdg" style="left:392px;width:40px;letter-spacing:-0.33px">Open</span>
<span class="c" style="left:492px;letter-spacing:-0.21px">On-Demand</span>
<span class="c" style="left:592px;letter-spacing:-0.25px">Signs | Elec...</span>
<span class="c" style="left:692px;letter-spacing:0.1px">0.00</span>
<span class="c" style="left:772px;letter-spacing:0.1px">0.00</span>
<span class="c" style="left:852px;letter-spacing:-0.12px">24HR Handyman</span>
<span class="c n94" style="left:1002px">93</span>
<span class="c" style="left:1022px">0</span>
<span class="c" style="left:1062px">0</span>
<svg class="lg2" viewBox="-1 -1 2 2"><path d="M-1-1A.94.94 0 0 1-.06-.06A.94.94 0 0 1-1-1Z" fill="#35b0b0"/><path d="M1-1A.94.94 0 0 0 .06-.06A.94.94 0 0 0 1-1Z" fill="#8fbe21"/><path d="M-1 1A.94.94 0 0 0-.06.06A.94.94 0 0 0-1 1Z" fill="#35b0b0"/><path d="M1 1A.94.94 0 0 1 .06.06A.94.94 0 0 1 1 1Z" fill="#35b0b0"/></svg>
<span class="c fx" style="left:1137px;letter-spacing:-0.78px">FEXA...</span>
<span class="c" style="left:1202px;letter-spacing:.32px">12/03/2024</span>
</div>
<div class="row" style="top:710px">
<svg class="chev" viewBox="0 0 10 6"><path d="M0.7 0.7L5 5L9.3 0.7" fill="none" stroke="#a6a6a6" stroke-width="1.25"/></svg>
<span class="cb"><svg viewBox="0 0 14 14"><rect x="0.9" y="0.9" width="12.2" height="12.2" rx="2" fill="none" stroke="#8c8c8c" stroke-width="1.6"/></svg></span>
<span class="c" style="left:102px;letter-spacing:-0.3px">8...</span>
<a class="c lnk" style="left:142px;letter-spacing:.1px">Pitstop 0154</a>
<span class="bdg" style="left:292px;width:56px;letter-spacing:0.07px">24 Hour</span>
<span class="bdg" style="left:392px;width:40px;letter-spacing:-0.33px">Open</span>
<span class="c" style="left:492px;letter-spacing:-0.21px">On-Demand</span>
<span class="c" style="left:592px;letter-spacing:-0.25px">Signs | Elec...</span>
<span class="c" style="left:692px;letter-spacing:0.1px">0.00</span>
<span class="c" style="left:772px;letter-spacing:0.1px">0.00</span>
<span class="c" style="left:852px;letter-spacing:-0.12px">24HR Handyman</span>
<span class="c n94" style="left:1002px">93</span>
<span class="c" style="left:1022px">0</span>
<span class="c" style="left:1062px">0</span>
<svg class="lg2" viewBox="-1 -1 2 2"><path d="M-1-1A.94.94 0 0 1-.06-.06A.94.94 0 0 1-1-1Z" fill="#35b0b0"/><path d="M1-1A.94.94 0 0 0 .06-.06A.94.94 0 0 0 1-1Z" fill="#8fbe21"/><path d="M-1 1A.94.94 0 0 0-.06.06A.94.94 0 0 0-1 1Z" fill="#35b0b0"/><path d="M1 1A.94.94 0 0 1 .06.06A.94.94 0 0 1 1 1Z" fill="#35b0b0"/></svg>
<span class="c fx" style="left:1137px;letter-spacing:-0.78px">FEXA...</span>
<span class="c" style="left:1202px;letter-spacing:.32px">12/03/2024</span>
</div>
<div class="row" style="top:751px">
<svg class="chev" viewBox="0 0 10 6"><path d="M0.7 0.7L5 5L9.3 0.7" fill="none" stroke="#a6a6a6" stroke-width="1.25"/></svg>
<span class="cb"><svg viewBox="0 0 14 14"><rect x="0.9" y="0.9" width="12.2" height="12.2" rx="2" fill="none" stroke="#8c8c8c" stroke-width="1.6"/></svg></span>
<span class="c" style="left:102px;letter-spacing:-0.3px">8...</span>
<a class="c lnk" style="left:142px;letter-spacing:.1px">Pitstop 0109</a>
<span class="bdg" style="left:292px;width:56px;letter-spacing:0.07px">24 Hour</span>
<span class="bdg" style="left:392px;width:40px;letter-spacing:-0.33px">Open</span>
<span class="c" style="left:492px;letter-spacing:-0.21px">On-Demand</span>
<span class="c" style="left:592px;letter-spacing:-0.25px">Signs | Elec...</span>
<span class="c" style="left:692px;letter-spacing:0.1px">0.00</span>
<span class="c" style="left:772px;letter-spacing:0.1px">0.00</span>
<span class="c" style="left:852px;letter-spacing:-0.12px">24HR Handyman</span>
<span class="c n94" style="left:1002px">93</span>
<span class="c" style="left:1022px">0</span>
<span class="c" style="left:1062px">0</span>
<svg class="lg2" viewBox="-1 -1 2 2"><path d="M-1-1A.94.94 0 0 1-.06-.06A.94.94 0 0 1-1-1Z" fill="#35b0b0"/><path d="M1-1A.94.94 0 0 0 .06-.06A.94.94 0 0 0 1-1Z" fill="#8fbe21"/><path d="M-1 1A.94.94 0 0 0-.06.06A.94.94 0 0 0-1 1Z" fill="#35b0b0"/><path d="M1 1A.94.94 0 0 1 .06.06A.94.94 0 0 1 1 1Z" fill="#35b0b0"/></svg>
<span class="c fx" style="left:1137px;letter-spacing:-0.78px">FEXA...</span>
<span class="c" style="left:1202px;letter-spacing:.32px">12/03/2024</span>
</div>
<div class="row" style="top:792px">
<svg class="chev" viewBox="0 0 10 6"><path d="M0.7 0.7L5 5L9.3 0.7" fill="none" stroke="#a6a6a6" stroke-width="1.25"/></svg>
<span class="cb"><svg viewBox="0 0 14 14"><rect x="0.9" y="0.9" width="12.2" height="12.2" rx="2" fill="none" stroke="#8c8c8c" stroke-width="1.6"/></svg></span>
<span class="c" style="left:102px;letter-spacing:-0.3px">8...</span>
<a class="c lnk" style="left:142px;letter-spacing:.1px">Pitstop 0046</a>
<span class="bdg" style="left:292px;width:56px;letter-spacing:0.07px">24 Hour</span>
<span class="bdg" style="left:392px;width:40px;letter-spacing:-0.33px">Open</span>
<span class="c" style="left:492px;letter-spacing:-0.21px">On-Demand</span>
<span class="c" style="left:592px;letter-spacing:-0.25px">Signs | Elec...</span>
<span class="c" style="left:692px;letter-spacing:0.1px">0.00</span>
<span class="c" style="left:772px;letter-spacing:0.1px">0.00</span>
<span class="c" style="left:852px;letter-spacing:-0.12px">24HR Handyman</span>
<span class="c n94" style="left:1002px">92</span>
<span class="c" style="left:1022px">0</span>
<span class="c" style="left:1062px">0</span>
<svg class="lg2" viewBox="-1 -1 2 2"><path d="M-1-1A.94.94 0 0 1-.06-.06A.94.94 0 0 1-1-1Z" fill="#35b0b0"/><path d="M1-1A.94.94 0 0 0 .06-.06A.94.94 0 0 0 1-1Z" fill="#8fbe21"/><path d="M-1 1A.94.94 0 0 0-.06.06A.94.94 0 0 0-1 1Z" fill="#35b0b0"/><path d="M1 1A.94.94 0 0 1 .06.06A.94.94 0 0 1 1 1Z" fill="#35b0b0"/></svg>
<span class="c fx" style="left:1137px;letter-spacing:-0.78px">FEXA...</span>
<span class="c" style="left:1202px;letter-spacing:.32px">12/03/2024</span>
</div>
<div class="row" style="top:833px">
<svg class="chev" viewBox="0 0 10 6"><path d="M0.7 0.7L5 5L9.3 0.7" fill="none" stroke="#a6a6a6" stroke-width="1.25"/></svg>
<span class="cb"><svg viewBox="0 0 14 14"><rect x="0.9" y="0.9" width="12.2" height="12.2" rx="2" fill="none" stroke="#8c8c8c" stroke-width="1.6"/></svg></span>
<span class="c" style="left:102px;letter-spacing:-0.3px">8...</span>
<a class="c lnk" style="left:142px;letter-spacing:.1px">Pitstop 0043</a>
<span class="bdg" style="left:292px;width:56px;letter-spacing:0.07px">24 Hour</span>
<span class="bdg" style="left:392px;width:40px;letter-spacing:-0.33px">Open</span>
<span class="c" style="left:492px;letter-spacing:-0.21px">On-Demand</span>
<span class="c" style="left:592px;letter-spacing:-0.25px">Signs | Elec...</span>
<span class="c" style="left:692px;letter-spacing:0.1px">0.00</span>
<span class="c" style="left:772px;letter-spacing:0.1px">0.00</span>
<span class="c" style="left:852px;letter-spacing:-0.12px">24HR Handyman</span>
<span class="c n94" style="left:1002px">92</span>
<span class="c" style="left:1022px">0</span>
<span class="c" style="left:1062px">0</span>
<svg class="lg2" viewBox="-1 -1 2 2"><path d="M-1-1A.94.94 0 0 1-.06-.06A.94.94 0 0 1-1-1Z" fill="#35b0b0"/><path d="M1-1A.94.94 0 0 0 .06-.06A.94.94 0 0 0 1-1Z" fill="#8fbe21"/><path d="M-1 1A.94.94 0 0 0-.06.06A.94.94 0 0 0-1 1Z" fill="#35b0b0"/><path d="M1 1A.94.94 0 0 1 .06.06A.94.94 0 0 1 1 1Z" fill="#35b0b0"/></svg>
<span class="c fx" style="left:1137px;letter-spacing:-0.78px">FEXA...</span>
<span class="c" style="left:1202px;letter-spacing:.32px">12/03/2024</span>
</div>
<div class="row" style="top:874px">
<span class="bdg red" style="left:292px;width:74px">&nbsp;</span>
<span class="bdg" style="left:392px;width:40px">&nbsp;</span>
</div>
</div></body></html>
